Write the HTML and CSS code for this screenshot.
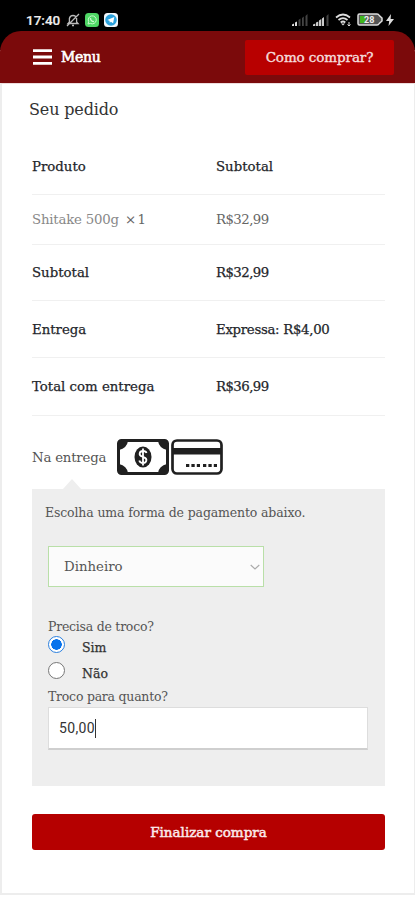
FILE: index.html
```html
<!DOCTYPE html>
<html lang="pt-BR">
<head>
<meta charset="utf-8">
<meta name="viewport" content="width=device-width, initial-scale=1">
<title>Seu pedido</title>
<link rel="stylesheet" href="styles.css">
</head>
<body>
<div class="status">
  <span class="clock">17:40</span>
  <svg class="mute" width="14" height="14" viewBox="0 0 14 14" fill="none" stroke="#bbb" stroke-width="1.3"><path d="M2 10.500h10L10.600 9V5.500Q10 2.500 7 2.500T3.400 5.500V9ZM6 12.500h2M1 13 13 1"/></svg>
  <svg class="whats" width="14" height="14" viewBox="0 0 14 14"><rect width="14" height="14" rx="3.500" fill="#4fd765"/><path d="m3 11 .7-2.300A4 4 0 1 1 5.400 10.400Z" fill="none" stroke="#c9f8cd" stroke-width="1"/><path d="M5.500 5c0 2 1.500 3.500 3.500 3.700" fill="none" stroke="#c9f8cd" stroke-width="1.300"/></svg>
  <svg class="telegram" width="14" height="14" viewBox="0 0 14 14"><rect width="14" height="14" rx="3.500" fill="#f2f8fc"/><circle cx="7" cy="7" r="5.800" fill="#2aa1dc"/><path d="m3.300 7 7-3-1.200 6.300-2.200-1.600-1.100 1-.3-2Z" fill="#fff"/></svg>
  <span class="spacer"></span>
  <svg class="signal" width="16" height="12" viewBox="0 0 16 12"><path d="M0 12v-1.500l2-1V12ZM3 12V8.500l2-1V12Z" fill="#ddd"/><path d="M6.500 12V6l2-1.500V12ZM10 12V4l1.800-1.500V12ZM13.500 12V2L15.500 0v12Z" fill="#444"/></svg>
  <svg class="signal2" width="16" height="12" viewBox="0 0 16 12"><path d="M0 12v-1.500l2.300-1V12ZM3 12V8.500l2.300-1V12ZM6 12V6.500l2.300-1.500V12ZM9 12V4.500l2-1.500V12Z" fill="#ccc"/><path d="M13.500 12V2L15.500 0v12Z" fill="#444"/></svg>
  <svg class="wifi" width="18" height="14" viewBox="0 0 18 14" fill="none" stroke="#ddd" stroke-width="1.700"><path d="M1 4.500Q8 -1.500 15 4.500M3.500 7Q8 3.300 12.500 7M5.700 9.500Q8 7.500 10.300 9.500"/><path d="m6 10.500 2 2 2-2Z" fill="#ddd" stroke="none"/><path d="M14 9v4M12.500 11.500 14 13l1.500-1.500" stroke-width="1"/></svg>
  <svg class="battery" width="27" height="13" viewBox="0 0 27 13"><path d="M2.500 1H20q1.500 0 2.300 1.500L25 5v3l-2.700 2.500Q21.500 12 20 12H2.500Q1 12 1 10.500v-8Q1 1 2.500 1Z" fill="#555" stroke="#ddd" stroke-width="1.500"/><path d="M3 3h5.500v7H3Z" fill="#41b51d"/><text x="7" y="10" class="charge">28</text></svg>
  <svg class="bolt" width="8" height="12" viewBox="0 0 8 12"><path d="M5 0 0 7h3.200L2.500 12 8 5H4.600Z" fill="#ddd"/></svg>
</div>
<header class="bar">
  <svg width="19" height="16" viewBox="0 0 19 16"><path d="M0 1.700h19M0 8h19M0 14.300h19" stroke="#fff" stroke-width="2.800"/></svg>
  <span class="menu">Menu</span>
  <a class="help"><span>Como comprar?</span></a>
</header>
<main class="page">
  <h1><span>Seu pedido</span></h1>
  <div class="order">
    <div class="row head"><span><b>Produto</b></span><span><b>Subtotal</b></span></div>
    <div class="row item"><span><span class="name">Shitake 500g</span> <em>×&#8202;1</em></span><span class="price">R$32,99</span></div>
    <div class="row"><span><b>Subtotal</b></span><span class="price">R$32,99</span></div>
    <div class="row"><span><b>Entrega</b></span><span class="shipping">Expressa: R$4,00</span></div>
    <div class="row"><span><b>Total com entrega</b></span><span class="price">R$36,99</span></div>
  </div>
  <div class="method">
    <span class="method-name">Na entrega</span>
    <svg width="52" height="36" viewBox="0 0 52 36"><rect x="1.500" y="1.500" width="49" height="33" rx="3" fill="#fff" stroke="#202020" stroke-width="3"/><path d="M2 2h9q-1 7-9 9ZM50 2h-9q1 7 9 9ZM2 34h9q-1-7-9-9ZM50 34h-9q1-7 9-9Z" fill="#202020"/><ellipse cx="26" cy="18" rx="8.500" ry="10.500" fill="#202020"/><path d="M29.500 14Q29 12 26 12c-4 0-4.500 4.500-1 5.500l2 .8c4 1.500 2.500 5.700-1 5.700q-3 0-3.700-2.500M26 9.500v17" fill="none" stroke="#fff" stroke-width="1.800"/></svg>
    <svg class="card" width="52" height="36" viewBox="0 0 52 36"><rect x="1.500" y="1.500" width="49" height="33" rx="4.500" fill="#fff" stroke="#202020" stroke-width="2.700"/><path d="M2 9h48v6.500H2Z" fill="#202020"/><path d="M15 26.500h14M32 26.500h14" stroke="#202020" stroke-width="3" stroke-dasharray="3.300 2.100"/></svg>
  </div>
  <section class="panel">
    <p>Escolha uma forma de pagamento abaixo.</p>
    <div class="select"><span>Dinheiro</span><svg width="10" height="6" viewBox="0 0 10 6"><path d="M.7 1 5 5l4.300-4" fill="none" stroke="#aaa" stroke-width="1.100"/></svg></div>
    <div class="question"><span>Precisa de troco?</span></div>
    <div class="option"><i class="radio on"></i><span>Sim</span></div>
    <div class="option"><i class="radio"></i><span>Não</span></div>
    <div class="amount"><span>Troco para quanto?</span></div>
    <div class="input"><span>50,00</span><i class="caret"></i></div>
  </section>
  <div class="submit"><span>Finalizar compra</span></div>
</main>
</body>
</html>
```
FILE: styles.css
```css
* { box-sizing: border-box; }
body { margin: 0; width: 415px; height: 900px; overflow: hidden; background: #fff; color: #24262b; font: 13.3px "Roboto Slab", "DejaVu Serif", serif; }
span, b { white-space: nowrap; }
svg { display: block; flex: none; }
.status { height: 50px; margin-bottom: -19px; padding: 0 21px 11px 26px; background: #000; display: flex; align-items: center; }
.clock { font: 500 13.5px Roboto, sans-serif; color: #eee; width: 40px; -webkit-text-stroke: .2px #eee; }
.whats { margin-left: 5px; }
.telegram { margin-left: 5px; }
.spacer { flex: 1; }
.signal2 { margin-left: 5px; }
.wifi { margin-left: 6px; }
.battery { margin-left: 4px; }
.bolt { margin-left: 2px; }
.charge { font: 700 9px Roboto, sans-serif; fill: #eee; }
.bar { height: 52px; background: #7b0a0b; border-radius: 21px 21px 0 0; display: flex; align-items: center; padding: 0 21px 0 33px; color: #fff; }
.menu { margin-left: 9px; font-size: 14px; -webkit-text-stroke: .6px #fff; letter-spacing: -.3px; }
.help { margin-left: auto; width: 149px; height: 35px; background: #b80000; border-radius: 2px; display: flex; align-items: center; justify-content: center; color: #f5dddd; font-size: 13.5px; letter-spacing: -.1px; -webkit-text-stroke: .4px #f5dddd; }
.page { height: 812px; border: 2px solid #ededed; border-top: 1px solid #eedcdc; border-right-width: 1px; padding: 0 29px 0 30px; }
h1 { margin: 0 0 0 -3px; height: 53px; line-height: 51px; font-size: 16px; letter-spacing: -.15px; font-weight: 400; color: #333; }
.order { display: grid; grid-template-rows: 58px 50px 56px 57px 58px; }
.row { display: grid; grid-template-columns: 184px 1fr; align-items: center; border-bottom: 1px solid #f0f0f0; -webkit-text-stroke: .25px currentColor; }
.head { padding-top: 1px; }
.row b, em { font-weight: 400; font-style: normal; }
.price { letter-spacing: -.55px; }
.shipping { letter-spacing: -.3px; }
.item { color: #666; -webkit-text-stroke: 0; }
.name { color: #888; margin-right: 2px; letter-spacing: -.2px; }
.method { height: 73px; padding-top: 9px; display: flex; align-items: center; color: #555; }
.method-name { width: 85px; letter-spacing: -.2px; }
.card { margin-left: 2px; }
.panel { position: relative; height: 297px; background: #eee; padding: 0 17px 0 16px; color: #555; }
.panel::before { content: ""; position: absolute; left: 31px; top: -10px; border: 9px solid transparent; border-top: 0; border-bottom: 10px solid #eee; }
.panel p { margin: 0 0 0 -3px; height: 57px; line-height: 47px; font-size: 12.5px; letter-spacing: -.14px; }
.select { width: 216px; height: 41px; border: 1.5px solid #b9dfa8; background: #fbfbfb; display: flex; align-items: center; justify-content: space-between; padding: 0 3px 0 15px; }
.question { height: 48px; line-height: 79px; font-size: 12.5px; letter-spacing: -.24px; }
.option { height: 26px; display: flex; align-items: flex-start; color: #333; font-size: 12.5px; }
.option span { line-height: 26px; margin-left: 17px; -webkit-text-stroke: .25px currentColor; }
.radio { width: 17px; height: 17px; border: 1.5px solid #777; border-radius: 50%; background: #fff; margin-top: 1px; }
.radio.on { border-color: #2b80df; background: radial-gradient(circle, #0873ec 0 5px, #fff 5.5px); }
.amount { height: 20px; line-height: 20px; font-size: 12.5px; letter-spacing: -.24px; }
.input { height: 43px; background: #fff; border: 1px solid #ddd; border-bottom: 2px solid #cfcfcf; display: flex; align-items: center; padding-left: 10px; font: 14px Roboto, sans-serif; letter-spacing: .35px; color: #333; }
.caret { width: 1px; height: 19px; background: #333; }
.submit { margin-top: 28px; height: 36px; background: #b50000; border-radius: 3px; display: flex; align-items: center; justify-content: center; color: #fbeaea; -webkit-text-stroke: .5px #fbeaea; font-size: 13.5px; }
```
